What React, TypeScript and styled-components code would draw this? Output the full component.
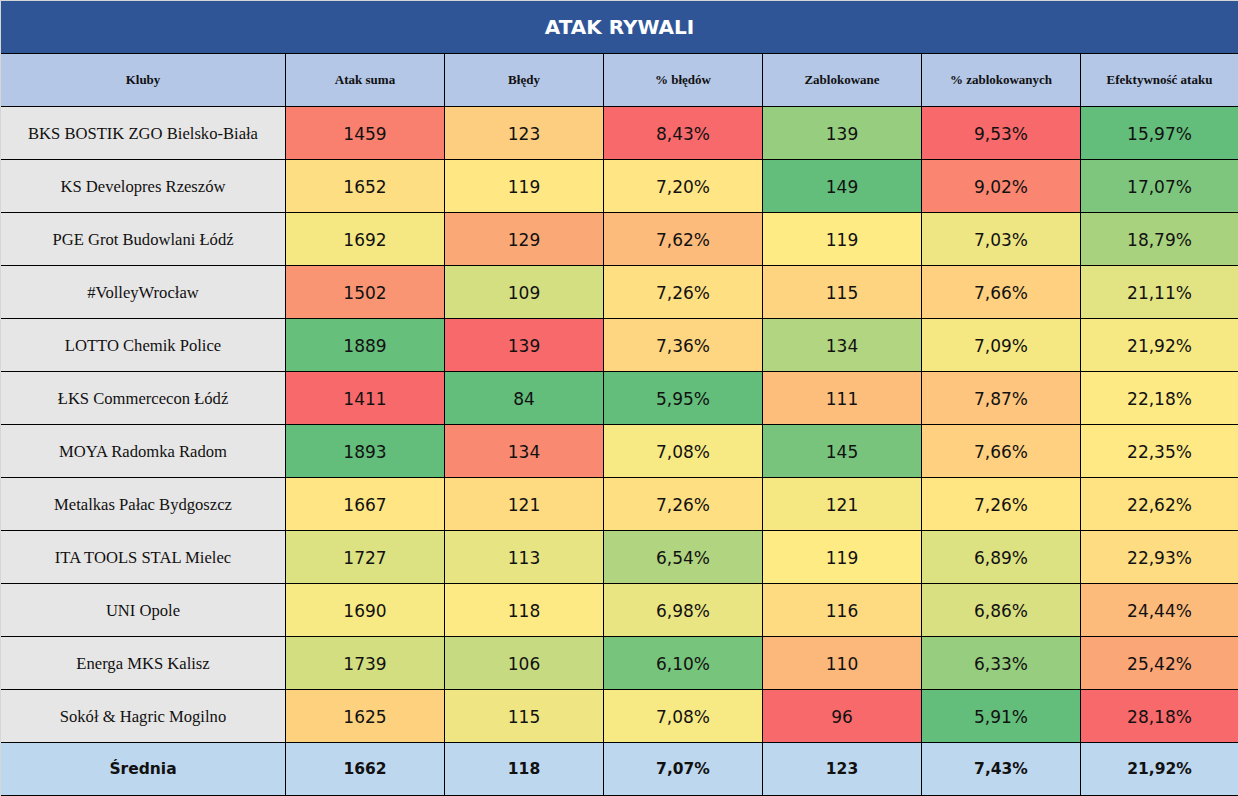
import styled, { createGlobalStyle } from "styled-components";

const GlobalStyle = createGlobalStyle`
  body {
    margin: 0;
    background: #fff;
  }
`;

//style
const Sheet = styled.div`
  width: 1238px;
  box-sizing: border-box;
  border-top: 1px solid #d6d6d6;
  border-left: 1px solid #d6d6d6;
`;
const Title = styled.div`
  height: 53px;
  box-sizing: border-box;
  border-bottom: 1px solid #000;
  background-color: #2f5597;
  color: #fff;
  display: flex;
  align-items: center;
  justify-content: center;
  font-family: "DejaVu Sans", Verdana, sans-serif;
  font-weight: 700;
  font-size: 20px;
`;
const Grid = styled.div`
  display: grid;
  grid-template-columns: 285px repeat(5, 159px) 1fr;
  grid-auto-rows: 53px;
`;
const Cell = styled.div<{ $bg?: string }>`
  box-sizing: border-box;
  border-right: 1px solid #000;
  border-bottom: 1px solid #000;
  display: flex;
  align-items: center;
  justify-content: center;
  text-align: center;
  color: #111;
  background-color: ${(p) => p.$bg ?? "#fff"};
  &:nth-child(7n) {
    border-right: none;
  }
`;
const HeadCell = styled(Cell)`
  background-color: #b4c7e7;
  font-family: "Liberation Serif", "Times New Roman", serif;
  font-weight: 700;
  font-size: 13px;
`;
const ClubCell = styled(Cell)`
  background-color: #e7e6e6;
  font-family: "Liberation Serif", "Times New Roman", serif;
  font-size: 16.6px;
  padding-top: 1px;
`;
const ValueCell = styled(Cell)`
  font-family: "DejaVu Sans", Tahoma, sans-serif;
  font-size: 17px;
  padding-top: 1px;
`;
const FootCell = styled(Cell)`
  background-color: #bdd7ee;
  font-family: "DejaVu Sans", Tahoma, sans-serif;
  font-weight: 700;
  font-size: 15.5px;
`;

//data
type Row = [string, number, number, number, number, number, number];

const headers = ["Kluby", "Atak suma", "Błędy", "% błędów", "Zablokowane", "% zablokowanych", "Efektywność ataku"];

const rows: Row[] = [
  ["BKS BOSTIK ZGO Bielsko-Biała", 1459, 123, 8.43, 139, 9.53, 15.97],
  ["KS Developres Rzeszów", 1652, 119, 7.2, 149, 9.02, 17.07],
  ["PGE Grot Budowlani Łódź", 1692, 129, 7.62, 119, 7.03, 18.79],
  ["#VolleyWrocław", 1502, 109, 7.26, 115, 7.66, 21.11],
  ["LOTTO Chemik Police", 1889, 139, 7.36, 134, 7.09, 21.92],
  ["ŁKS Commercecon Łódź", 1411, 84, 5.95, 111, 7.87, 22.18],
  ["MOYA Radomka Radom", 1893, 134, 7.08, 145, 7.66, 22.35],
  ["Metalkas Pałac Bydgoszcz", 1667, 121, 7.26, 121, 7.26, 22.62],
  ["ITA TOOLS STAL Mielec", 1727, 113, 6.54, 119, 6.89, 22.93],
  ["UNI Opole", 1690, 118, 6.98, 116, 6.86, 24.44],
  ["Energa MKS Kalisz", 1739, 106, 6.1, 110, 6.33, 25.42],
  ["Sokół & Hagric Mogilno", 1625, 115, 7.08, 96, 5.91, 28.18],
];

const footer = ["Średnia", "1662", "118", "7,07%", "123", "7,43%", "21,92%"];

// true = higher value is better (green)
const highGood = [true, false, false, true, false, false];
const isPct = [false, false, true, false, true, true];

const RED = [248, 105, 107];
const YELLOW = [255, 235, 132];
const GREEN = [99, 190, 123];

const mix = (a: number[], b: number[], t: number) =>
  `rgb(${a.map((v, i) => Math.round(v + (b[i] - v) * t)).join(",")})`;

// excel style 3-colour scale, midpoint = 50th percentile
function scaleColor(col: number, value: number) {
  const vals = rows.map((r) => r[col + 1] as number).sort((a, b) => a - b);
  const min = vals[0];
  const max = vals[vals.length - 1];
  const k = (vals.length - 1) * 0.5;
  const mid = vals[Math.floor(k)] + (vals[Math.ceil(k)] - vals[Math.floor(k)]) * (k - Math.floor(k));
  const lo = highGood[col] ? RED : GREEN;
  const hi = highGood[col] ? GREEN : RED;
  if (value <= mid) return mix(lo, YELLOW, mid === min ? 1 : (value - min) / (mid - min));
  return mix(YELLOW, hi, max === mid ? 0 : (value - mid) / (max - mid));
}

const fmt = (col: number, v: number) => (isPct[col] ? `${v.toFixed(2).replace(".", ",")}%` : String(v));

function App() {
  return (
    <>
      <GlobalStyle />
      <Sheet>
        <Title>ATAK RYWALI</Title>
        <Grid>
          {headers.map((h) => (
            <HeadCell key={h}>{h}</HeadCell>
          ))}
          {rows.map((row) => [
            <ClubCell key={row[0]}>{row[0]}</ClubCell>,
            ...row.slice(1).map((v, i) => (
              <ValueCell key={row[0] + i} $bg={scaleColor(i, v as number)}>
                {fmt(i, v as number)}
              </ValueCell>
            )),
          ])}
          {footer.map((f, i) => (
            <FootCell key={"f" + i}>{f}</FootCell>
          ))}
        </Grid>
      </Sheet>
    </>
  );
}

export default App;
